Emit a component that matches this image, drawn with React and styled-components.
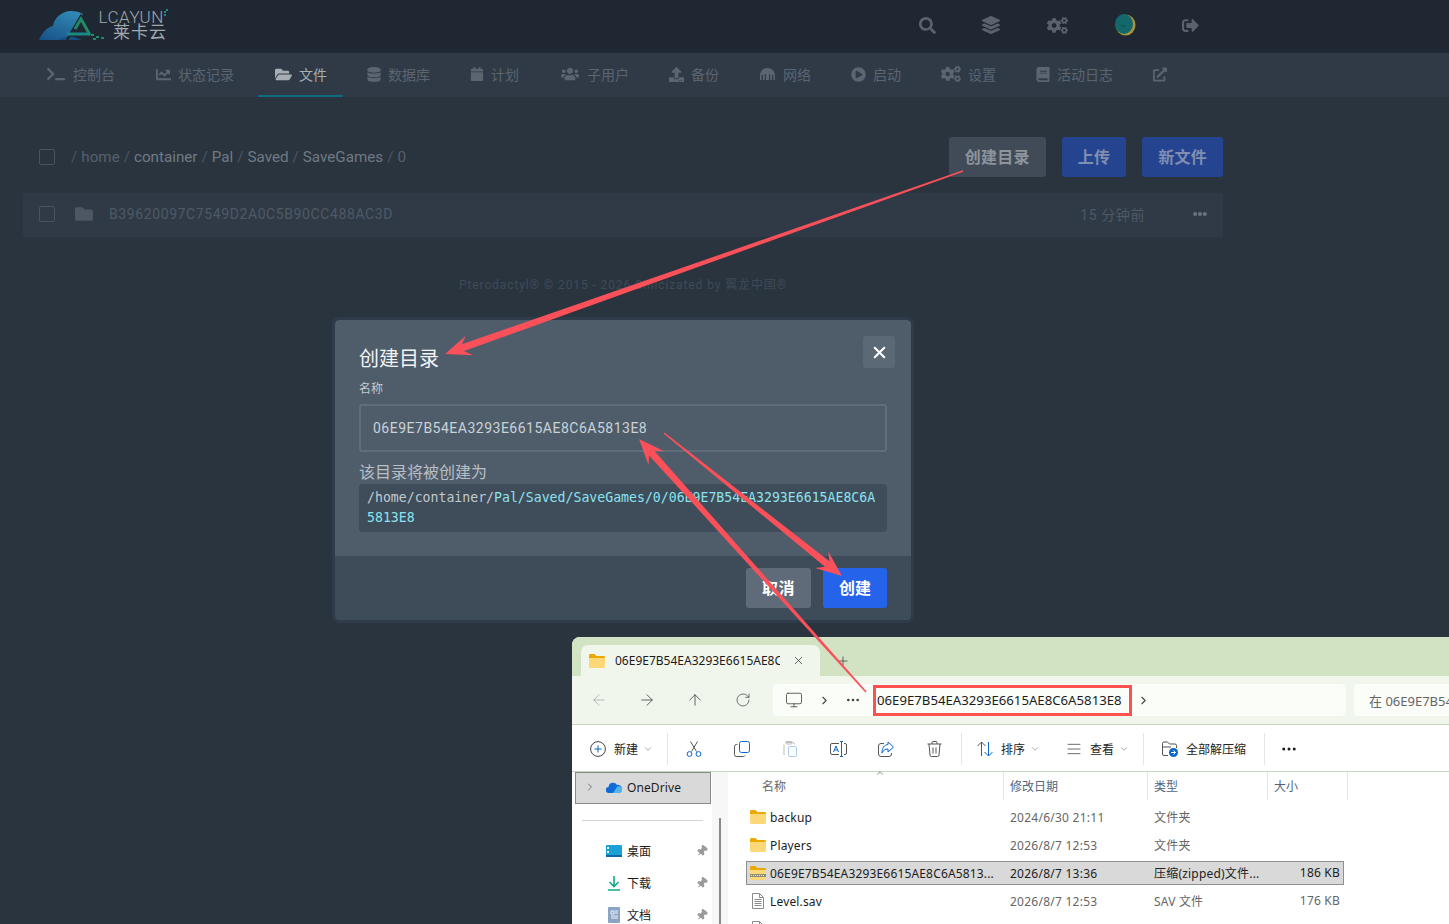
import React from 'react'
import styled, { createGlobalStyle } from 'styled-components'
import {
  FaTerminal, FaChartLine, FaFolderOpen, FaDatabase, FaCalendar, FaUsers, FaUpload,
  FaPlayCircle, FaCogs, FaBook, FaExternalLinkAlt, FaSearch, FaLayerGroup, FaSignOutAlt,
  FaFolder, FaEllipsisH,
} from 'react-icons/fa'
import {
  ArrowLeft, ArrowRight, ArrowUp, RotateCw, Monitor, ChevronRight, ChevronDown, ChevronUp,
  MoreHorizontal, Plus, X, AlignJustify, Pin,
} from 'lucide-react'

const UI_FONT = `Roboto, "Noto Sans CJK SC", sans-serif`
const WIN_FONT = `"Noto Sans", "Noto Sans CJK SC", sans-serif`

const Global = createGlobalStyle`
  html, body { margin: 0; padding: 0; background: #2a343f; }
  * { box-sizing: border-box; }
`

const Page = styled.div`
  position: relative;
  width: 100%;
  height: 924px;
  overflow: hidden;
  background: #2a343f;
  font-family: ${UI_FONT};
`

/* top bar */
const TopBar = styled.div`
  height: 53px;
  display: flex;
  align-items: center;
  padding: 0 0 3px 38px;
  background: #1f2733;
`
const LogoWrap = styled.div`
  display: flex;
  align-items: flex-start;
  height: 40px;
`
const LogoMark = styled.svg`
  margin-top: 4px;
`
const LogoText = styled.div`
  width: 70px;
  display: flex;
  flex-direction: column;
  align-items: flex-end;
  margin-left: -9px;
  color: #a3a8ac;
`
const LogoLatin = styled.span`
  position: relative;
  margin: 6px 5px 0 0;
  font-size: 17px;
  line-height: 13px;
  font-weight: 300;
  letter-spacing: 0.6px;
  &::after {
    content: '';
    position: absolute;
    right: -2px;
    top: 0;
    width: 2px;
    height: 2px;
    background: #1f8a83;
    box-shadow: 2px -2px 0 #1f8a83, 0 3px 0 #1f8a83;
  }
`
const LogoCjk = styled.span`
  margin: 0 2px 0 0;
  font-size: 17px;
  line-height: 17px;
  letter-spacing: 1px;
`
const TopIcons = styled.div`
  display: flex;
  align-items: center;
  margin-left: 726px;
`
const TopIcon = styled.div`
  width: ${p => p.$w}px;
  display: flex;
  justify-content: center;
  color: #5a626d;
  font-size: ${p => p.$size || 17}px;
`

const Avatar = () => (
  <svg width="22" height="22" viewBox="0 0 22 22">
    <ellipse cx="11.5" cy="11" rx="10" ry="10.5" fill="#a8943c" />
    <ellipse cx="10" cy="10" rx="9" ry="10" fill="#14676b" />
    <path d="M7 11c1 1.5 3 1.500 5 0" stroke="#0e4e52" fill="none" />
  </svg>
)

const Logo = () => (
  <LogoMark width="70" height="32" viewBox="0 0 70 32">
    <defs>
      <linearGradient id="cloud" x1="0" y1="1" x2="0.6" y2="0">
        <stop offset="0" stopColor="#174f86" />
        <stop offset="1" stopColor="#2f86b2" />
      </linearGradient>
    </defs>
    <path d="M1 31C4 24 9 18 15 17C16 9 24 2 33 2C38 2 42 3 45 5L32 28L29 31Z" fill="url(#cloud)" />
    <path d="M20 31C24 28 30 27 36 28L44 31Z" fill="#154f80" />
    <path d="M29 31L43 7L57 30" fill="none" stroke="#1f2733" strokeWidth="2.500" />
    <path d="M37 20L43 10L52 26" fill="none" stroke="#1f8a63" strokeWidth="3" />
    <path d="M29 25H52" fill="none" stroke="#178a86" strokeWidth="3" />
    <path d="M53 25h3v2h-3zM58 27h3v2h-3zM63 28h3v2h-3zM55 29h3v2h-3z" fill="#1f8a63" />
  </LogoMark>
)

/* server nav */
const NavBar = styled.div`
  height: 44px;
  display: flex;
  gap: 8px;
  padding-left: 30px;
  background: #303a47;
`
const NavItem = styled.div`
  height: 44px;
  display: flex;
  align-items: center;
  gap: 7px;
  padding: 0 16px 2px;
  font-size: 14px;
  color: ${p => (p.$active ? '#a6adb4' : '#5b6570')};
  box-shadow: ${p => (p.$active ? 'inset 0 -2px 0 #0e6a7f' : 'none')};
`
const NavGlyph = styled.span`
  display: flex;
  justify-content: center;
  width: ${p => p.$w}px;
  font-size: ${p => p.$size || 14}px;
`

const NetworkGlyph = () => (
  <svg width="15" height="12" viewBox="0 0 15 12" fill="currentColor">
    <path d="M0 12V7.500C0 3 3.400 0 7.500 0S15 3 15 7.500V12h-1.600V7H12v5h-1.800V6H9v6H6V6H4.800v6H3V7H1.600v5z" />
  </svg>
)

const navItems = [
  { label: '控制台', icon: <FaTerminal />, w: 20, size: 18 },
  { label: '状态记录', icon: <FaChartLine />, w: 16, size: 15 },
  { label: '文件', icon: <FaFolderOpen />, w: 18, size: 17, active: true },
  { label: '数据库', icon: <FaDatabase />, w: 14, size: 15 },
  { label: '计划', icon: <FaCalendar />, w: 14 },
  { label: '子用户', icon: <FaUsers />, w: 21, size: 18 },
  { label: '备份', icon: <FaUpload />, w: 15, size: 15 },
  { label: '网络', icon: <NetworkGlyph />, w: 17 },
  { label: '启动', icon: <FaPlayCircle />, w: 15, size: 15 },
  { label: '设置', icon: <FaCogs />, w: 20, size: 20 },
  { label: '活动日志', icon: <FaBook />, w: 14, size: 15 },
  { label: '', icon: <FaExternalLinkAlt />, w: 14, size: 15 },
]

/* file manager */
const Main = styled.div`
  width: 1200px;
  margin-left: 23px;
  padding-top: 40px;
`
const ActionRow = styled.div`
  height: 40px;
  display: flex;
  align-items: center;
  padding-left: 16px;
`
const CheckBox = styled.span`
  flex: none;
  width: 16px;
  height: 16px;
  border: 1.5px solid #48535f;
  border-radius: 2px;
`
const Crumbs = styled.div`
  margin-left: 16px;
  font-size: 15.2px;
  color: #4a5561;
`
const Crumb = styled.span`
  color: ${p => (p.$dim ? '#55606c' : '#707a84')};
  margin: 0 4px;
`
const Actions = styled.div`
  margin-left: auto;
  display: flex;
  gap: 16px;
`
const ActionButton = styled.div`
  height: 40px;
  padding: 0 16px 2px;
  display: flex;
  align-items: center;
  border-radius: 3px;
  font-size: 16px;
  font-weight: 700;
  letter-spacing: 0.25px;
  color: ${p => (p.$blue ? '#7f8eb1' : '#8d949b')};
  background: ${p => (p.$blue ? '#25448f' : '#414b58')};
`
const FileRow = styled.div`
  height: 44px;
  margin-top: 16px;
  display: flex;
  align-items: center;
  padding: 0 16px 2px;
  background: #303a47;
  border-radius: 2px;
  font-size: 14px;
  letter-spacing: 0.6px;
  color: #4e5965;
`
const FolderGlyph = styled.span`
  display: flex;
  margin: 0 16px 0 20px;
  font-size: 18px;
  color: #4d5763;
`
const FileTime = styled.span`
  margin-left: auto;
  margin-right: 48px;
`
const Dots = styled.span`
  display: flex;
  font-size: 14px;
  color: #6a737d;
`
const Credit = styled.div`
  margin-top: 38px;
  text-align: center;
  font-size: 12px;
  letter-spacing: 0.9px;
  color: #3f4a56;
`

/* modal */
const Modal = styled.div`
  position: absolute;
  left: 335px;
  top: 320px;
  width: 576px;
  height: 300px;
  display: flex;
  flex-direction: column;
  border-radius: 4px;
  overflow: hidden;
  background: #4f5d6b;
  outline: 3px solid #2f3b48;
`
const ModalBody = styled.div`
  height: 236px;
  padding: 25px 24px 0;
`
const ModalTitle = styled.div`
  font-size: 20px;
  line-height: 28px;
  color: #f1f3f5;
`
const FieldLabel = styled.div`
  margin-top: 7px;
  font-size: 12px;
  line-height: 18px;
  color: #c4cad0;
`
const NameField = styled.div`
  height: 48px;
  margin-top: 6px;
  display: flex;
  align-items: center;
  padding: 0 12px;
  border: 2px solid #606d7b;
  border-radius: 3px;
  font-size: 14px;
  letter-spacing: 0.5px;
  color: #cbd2d8;
`
const Hint = styled.div`
  margin-top: 8px;
  padding-top: 1px;
  height: 24px;
  font-size: 16px;
  line-height: 24px;
  color: #b8bfc6;
`
const PathBox = styled.div`
  padding: 4px 8px;
  background: #3f4c5a;
  border-radius: 4px;
  font-family: "DejaVu Sans Mono", monospace;
  font-size: 13.2px;
  line-height: 20px;
  word-break: break-all;
  color: #c2c9cf;
`
const PathTail = styled.span`
  color: #8ae3ef;
`
const ModalFoot = styled.div`
  flex: 1;
  display: flex;
  justify-content: flex-end;
  align-items: center;
  gap: 12px;
  padding: 0 24px;
  background: #3e4c5a;
`
const ModalButton = styled.div`
  height: 40px;
  padding: 0 16px 3px;
  display: flex;
  align-items: center;
  border-radius: 3px;
  font-size: 16px;
  font-weight: 700;
  letter-spacing: ${p => (p.$primary ? 0 : 0.5)}px;
  color: #fff;
  background: ${p => (p.$primary ? '#2563eb' : '#5f6b78')};
`
const CloseButton = styled.div`
  position: absolute;
  top: 16px;
  right: 16px;
  width: 32px;
  height: 32px;
  display: flex;
  align-items: center;
  justify-content: center;
  border-radius: 3px;
  color: #fff;
  background: #5b6876;
`

/* explorer window */
const Explorer = styled.div`
  position: absolute;
  left: 572px;
  top: 637px;
  width: 1000px;
  height: 300px;
  display: flex;
  flex-direction: column;
  border-top-left-radius: 8px;
  overflow: hidden;
  background: #fff;
  font-family: ${WIN_FONT};
  font-size: 12px;
  color: #1c1c1c;
`
const TabStrip = styled.div`
  flex: none;
  height: 39px;
  display: flex;
  padding: 8px 0 0 9px;
  background: #d2e3c3;
`
const Tab = styled.div`
  width: 239px;
  height: 31px;
  display: flex;
  align-items: center;
  padding-left: 8px;
  border-radius: 7px 7px 0 0;
  background: #f1f6ec;
`
const TabTitle = styled.span`
  width: 165px;
  margin-left: 10px;
  overflow: hidden;
  white-space: nowrap;
`
const TabClose = styled.span`
  display: flex;
  margin-left: 12px;
`
const TabPlus = styled.span`
  display: flex;
  align-items: center;
  margin-left: 16px;
  color: #333;
`
const AddressRow = styled.div`
  flex: none;
  height: 49px;
  display: flex;
  align-items: center;
  padding-left: 3px;
  background: #f1f6ec;
  border-bottom: 1px solid #c8d7bb;
`
const NavButton = styled.span`
  flex: none;
  width: 48px;
  display: flex;
  justify-content: center;
  color: ${p => (p.$off ? '#a9ada6' : '#444')};
`
const AddressBox = styled.div`
  flex: none;
  width: 573px;
  height: 32px;
  margin-left: 6px;
  display: flex;
  align-items: center;
  padding-left: 12px;
  border-radius: 4px;
  background: #fbfdf9;
`
const AddressPart = styled.span`
  display: flex;
  margin-left: ${p => p.$ml || 0}px;
  color: #444;
`
const MarkedCrumb = styled.div`
  flex: none;
  width: 259px;
  height: 31px;
  margin-left: 12px;
  display: flex;
  align-items: center;
  padding-left: 1px;
  border: 3px solid #ff5050;
  font-size: 13.2px;
  white-space: nowrap;
`
const SearchBox = styled.div`
  flex: none;
  width: 300px;
  height: 32px;
  margin-left: 8px;
  display: flex;
  align-items: center;
  padding-left: 15px;
  border-radius: 4px;
  background: #fbfdf9;
  font-size: 13px;
  white-space: nowrap;
  color: #666;
`
const CommandBar = styled.div`
  flex: none;
  height: 47px;
  display: flex;
  align-items: center;
  padding: 2px 0 0 8px;
  background: #fff;
  border-bottom: 1px solid #c9d7bc;
`
const MenuButton = styled.div`
  flex: none;
  width: ${p => p.$w}px;
  padding-left: ${p => p.$pl}px;
  display: flex;
  align-items: center;
  gap: 8px;
  white-space: nowrap;
  color: #222;
`
const CommandDivider = styled.span`
  flex: none;
  width: 1px;
  height: 32px;
  background: #e4e4e4;
`
const IconGroup = styled.div`
  display: flex;
  margin: 0 3px 0 2px;
`
const CommandIcon = styled.span`
  width: 48px;
  display: flex;
  justify-content: center;
`
const Caret = styled.span`
  display: flex;
  margin-left: -3px;
  color: #999;
`
const Panes = styled.div`
  flex: 1;
  display: flex;
`
const Sidebar = styled.div`
  flex: none;
  width: 140px;
`
const DriveRow = styled.div`
  width: 136px;
  height: 32px;
  margin-left: 3px;
  display: flex;
  align-items: center;
  padding: 0 0 2px 8px;
  background: #d9d9d9;
  border: 1px solid #8a8a8a;
  letter-spacing: 0.1px;
`
const DriveName = styled.span`
  margin-left: 5px;
`
const SideRule = styled.div`
  height: 1px;
  margin: 16px 9px 14px 10px;
  background: #d4d4d4;
`
const PlaceRow = styled.div`
  height: 32px;
  display: flex;
  align-items: center;
  padding: 0 4px 0 34px;
  gap: 5px;
`
const PinMark = styled.span`
  display: flex;
  margin-left: auto;
  color: #9a9a9a;
  transform: rotate(40deg);
`
const ScrollStrip = styled.div`
  flex: none;
  width: 16px;
  padding: 46px 0 0 7px;
  background: #f7f7f7;
`
const ScrollThumb = styled.div`
  width: 2px;
  height: 200px;
  background: #8a8a8a;
`
const Files = styled.div`
  position: relative;
  flex: 1;
`
const SortCaret = styled.span`
  position: absolute;
  left: 147px;
  top: -4px;
  display: flex;
  color: #777;
`
const HeaderRow = styled.div`
  height: 28px;
  display: grid;
  grid-template-columns: 276px 144px 120px 80px;
  margin-bottom: 5px;
`
const HeaderCell = styled.div`
  padding-left: ${p => p.$pl}px;
  display: flex;
  align-items: center;
  border-right: 1px solid #e5e5e5;
  color: ${p => (p.$first ? '#666' : '#51657d')};
`
const Row = styled.div`
  width: 598px;
  height: 24px;
  margin: 0 0 4px 18px;
  display: grid;
  grid-template-columns: 260px 144px 1fr;
  align-items: center;
  padding-left: 3px;
  border: 1px solid ${p => (p.$selected ? '#8f8f8f' : 'transparent')};
  background: ${p => (p.$selected ? '#d9d9d9' : 'transparent')};
`
const NameCell = styled.span`
  display: flex;
  align-items: center;
  gap: 4px;
  letter-spacing: 0.16px;
  white-space: nowrap;
`
const FileIconSlot = styled.span`
  width: 16px;
  display: flex;
  justify-content: center;
`
const DateCell = styled.span`
  letter-spacing: 0.25px;
  color: ${p => (p.$selected ? '#222' : '#666')};
`
const TypeCell = styled.span`
  display: flex;
  justify-content: space-between;
  padding-right: 3px;
  letter-spacing: 0.2px;
  white-space: nowrap;
  color: ${p => (p.$selected ? '#222' : '#666')};
`

const WinFolder = ({ zip }) => (
  <svg width="16" height="14" viewBox="0 0 16 14">
    <path d="M0 1.500C0 .7.6 0 1.400 0h4l2 2h7.200c.8 0 1.400.6 1.400 1.400V5H0z" fill="#eba900" />
    <path d="M0 4h16v8.600c0 .8-.6 1.400-1.400 1.400H1.400C.6 14 0 13.400 0 12.600z" fill="#fcd878" />
    {zip && <path d="M0 8h16v3H0z" fill="#8c8c78" />}
    {zip && <path d="M1 9.500h14" stroke="#e8e8da" strokeDasharray="1 1" />}
  </svg>
)
const WinDoc = () => (
  <svg width="14" height="16" viewBox="0 0 14 16" fill="#fff" stroke="#8a8a8a">
    <path d="M1.500.5h7l4 4v11h-11zM8.500.5v4h4" />
    <path d="M3.500 6.500h7M3.500 8.500h7M3.500 10.500h7M3.500 12.500h7" />
  </svg>
)
const CircleAdd = () => (
  <svg width="16" height="16" viewBox="0 0 16 16" fill="none">
    <circle cx="8" cy="8" r="7.400" stroke="#444" />
    <path d="M8 4.500v7M4.500 8h7" stroke="#0a66c8" />
  </svg>
)
const Cut = () => (
  <svg width="16" height="16" viewBox="0 0 16 16" fill="none" strokeWidth="1">
    <path d="M4.500 .5l6 10M11.500 .5l-6 10" stroke="#555" />
    <circle cx="3.500" cy="13" r="2.400" stroke="#0a66c8" />
    <circle cx="12.500" cy="13" r="2.400" stroke="#0a66c8" />
  </svg>
)
const CopyIcon = () => (
  <svg width="16" height="16" viewBox="0 0 16 16" fill="none">
    <rect x="5.500" y=".5" width="10" height="11" rx="2" stroke="#0a66c8" />
    <path d="M3.500 3.500h-1a2 2 0 0 0-2 2v8a2 2 0 0 0 2 2h7a2 2 0 0 0 1.600-1" stroke="#555" />
  </svg>
)
const PasteIcon = () => (
  <svg width="16" height="16" viewBox="0 0 16 16" fill="none" stroke="#bcbcbc">
    <path d="M3.500 1.500h7a2 2 0 0 1 2 2M2 14V3.500" />
    <rect x="4" y=".5" width="6" height="2.500" rx="1" />
    <rect x="6.500" y="5.500" width="8" height="10" rx="1.500" stroke="#a9cbee" />
  </svg>
)
const RenameIcon = () => (
  <svg width="17" height="16" viewBox="0 0 17 16" fill="none">
    <path d="M9 2.500H2A1.500 1.500 0 0 0 .5 4v8A1.500 1.500 0 0 0 2 13.500h7M14 2.500h1A1.500 1.500 0 0 1 16.500 4v8a1.500 1.500 0 0 1-1.500 1.500h-1" stroke="#555" />
    <path d="M10 .5h3M11.500 .5v15M10 15.500h3M3.500 11L6 5l2.500 6M4.500 9h3" stroke="#0a66c8" />
  </svg>
)
const ShareIcon = () => (
  <svg width="16" height="16" viewBox="0 0 16 16" fill="none">
    <path d="M6 2.500H3A2.500 2.500 0 0 0 .5 5v8A2.500 2.500 0 0 0 3 15.500h8a2.500 2.500 0 0 0 2.500-2.500v-1" stroke="#555" />
    <path d="M10 1l5.500 5L10 11V8C7 8 5.500 9 4 12c0-5 2-8 6-8.500z" stroke="#0a66c8" />
  </svg>
)
const TrashIcon = () => (
  <svg width="15" height="16" viewBox="0 0 15 16" fill="none" stroke="#555">
    <path d="M.5 3h14M5 3V1.500A1 1 0 0 1 6 .5h3a1 1 0 0 1 1 1V3M2 3l1 11a1.500 1.500 0 0 0 1.500 1.500h6A1.500 1.500 0 0 0 12 14l1-11M6 6.500v6M9 6.500v6" />
  </svg>
)
const SortIcon = () => (
  <svg width="16" height="16" viewBox="0 0 16 16" fill="none">
    <path d="M4.500 15V1M.5 5l4-4 4 4" stroke="#555" />
    <path d="M11.500 1v14M7.500 11l4 4 4-4" stroke="#0a66c8" />
  </svg>
)
const ExtractIcon = () => (
  <svg width="16" height="16" viewBox="0 0 16 16">
    <path d="M.5 13V2.500A1.500 1.500 0 0 1 2 1h3.500l2 2H13a1.500 1.500 0 0 1 1.500 1.500V7M.5 6H9M.5 13A1.500 1.500 0 0 0 2 14.500h4" fill="none" stroke="#555" />
    <circle cx="11.500" cy="11.500" r="4.500" fill="#0a66c8" />
    <path d="M9 11.500h4.500M11.500 9.500l2 2-2 2" fill="none" stroke="#fff" />
  </svg>
)
const CloudIcon = () => (
  <svg width="16" height="11" viewBox="0 0 16 11">
    <path d="M3 11a3 3 0 0 1-.4-6A4.500 4.500 0 0 1 11 3a3.500 3.500 0 0 1 2 8z" fill="#0f6cd6" />
    <path d="M7 11l4-6a3 3 0 0 1 5 3 3 3 0 0 1-3 3z" fill="#4fb4ee" />
  </svg>
)
const DesktopIcon = () => (
  <svg width="16" height="12" viewBox="0 0 16 12">
    <rect width="16" height="12" rx="1" fill="#1ba1d8" />
    <rect x="1" y="2" width="2" height="2" fill="#e8f6fc" />
    <rect x="1" y="6" width="2" height="2" fill="#e8f6fc" />
    <rect y="10" width="16" height="2" fill="#0e6a9c" />
  </svg>
)
const DownloadIcon = () => (
  <svg width="16" height="15" viewBox="0 0 16 15" fill="none" stroke="#14a88a" strokeWidth="1.600">
    <path d="M8 0v10M3.500 6L8 10.500 12.500 6M2 14h12" />
  </svg>
)
const DocsIcon = () => (
  <svg width="16" height="16" viewBox="0 0 16 16">
    <rect x="2" width="12" height="16" rx="1" fill="#8ba4c4" />
    <path d="M5 4h3v3H5zM9 4h3M9 6h3M5 9h7M5 11h7" stroke="#eef3f9" fill="none" />
  </svg>
)

const places = [
  { label: '桌面', icon: <DesktopIcon /> },
  { label: '下载', icon: <DownloadIcon /> },
  { label: '文档', icon: <DocsIcon /> },
]
const rows = [
  { name: 'backup', date: '2024/6/30 21:11', type: '文件夹', icon: <WinFolder /> },
  { name: 'Players', date: '2026/8/7 12:53', type: '文件夹', icon: <WinFolder /> },
  { name: '06E9E7B54EA3293E6615AE8C6A5813...', date: '2026/8/7 13:36', type: '压缩(zipped)文件...', size: '186 KB', icon: <WinFolder zip />, selected: true },
  { name: 'Level.sav', date: '2026/8/7 12:53', type: 'SAV 文件', size: '176 KB', icon: <WinDoc /> },
  { name: '', date: '', type: '', icon: <WinDoc /> },
]

/* hand-drawn annotation arrows sit over everything */
const Annotations = styled.svg`
  position: absolute;
  left: 0;
  top: 0;
  pointer-events: none;
`
const arrowPoints = (x0, y0, x1, y1) => {
  const len = Math.hypot(x1 - x0, y1 - y0)
  const dx = (x1 - x0) / len
  const dy = (y1 - y0) / len
  const at = (back, side) => `${x1 - dx * back - dy * side},${y1 - dy * back + dx * side}`
  return [
    at(len, 0.8),
    at(19, 3.5),
    at(26, 10.5),
    `${x1},${y1}`,
    at(26, -10.5),
    at(19, -3.5),
    at(len, -0.8),
  ].join(' ')
}

export default function App() {
  return (
    <Page>
      <Global />
      <TopBar>
        <LogoWrap>
          <Logo />
          <LogoText>
            <LogoLatin>LCAYUN</LogoLatin>
            <LogoCjk>莱卡云</LogoCjk>
          </LogoText>
        </LogoWrap>
        <TopIcons>
          <TopIcon $w={64}><FaSearch /></TopIcon>
          <TopIcon $w={64} $size={18}><FaLayerGroup /></TopIcon>
          <TopIcon $w={68} $size={21}><FaCogs /></TopIcon>
          <TopIcon $w={68}><Avatar /></TopIcon>
          <TopIcon $w={62}><FaSignOutAlt /></TopIcon>
        </TopIcons>
      </TopBar>

      <NavBar>
        {navItems.map(item => (
          <NavItem key={item.label || 'open'} $active={item.active}>
            <NavGlyph $w={item.w} $size={item.size}>{item.icon}</NavGlyph>
            {item.label}
          </NavItem>
        ))}
      </NavBar>

      <Main>
        <ActionRow>
          <CheckBox />
          <Crumbs>
            /<Crumb $dim>home</Crumb>/<Crumb>container</Crumb>/<Crumb>Pal</Crumb>/<Crumb>Saved</Crumb>/<Crumb>SaveGames</Crumb>/<Crumb $dim>0</Crumb>
          </Crumbs>
          <Actions>
            <ActionButton>创建目录</ActionButton>
            <ActionButton $blue>上传</ActionButton>
            <ActionButton $blue>新文件</ActionButton>
          </Actions>
        </ActionRow>
        <FileRow>
          <CheckBox />
          <FolderGlyph><FaFolder /></FolderGlyph>
          B39620097C7549D2A0C5B90CC488AC3D
          <FileTime>15 分钟前</FileTime>
          <Dots><FaEllipsisH /></Dots>
        </FileRow>
        <Credit>Pterodactyl® © 2015 - 2026 Sinicizated by 翼龙中国®</Credit>
      </Main>

      <Modal>
        <ModalBody>
          <ModalTitle>创建目录</ModalTitle>
          <FieldLabel>名称</FieldLabel>
          <NameField>06E9E7B54EA3293E6615AE8C6A5813E8</NameField>
          <Hint>该目录将被创建为</Hint>
          <PathBox>
            /home/container/<PathTail>Pal/Saved/SaveGames/0/06E9E7B54EA3293E6615AE8C6A5813E8</PathTail>
          </PathBox>
        </ModalBody>
        <ModalFoot>
          <ModalButton>取消</ModalButton>
          <ModalButton $primary>创建</ModalButton>
        </ModalFoot>
        <CloseButton><X size={19} strokeWidth={2.6} /></CloseButton>
      </Modal>

      <Explorer>
        <TabStrip>
          <Tab>
            <WinFolder />
            <TabTitle>06E9E7B54EA3293E6615AE8C6A5813E8</TabTitle>
            <TabClose><X size={13} strokeWidth={1.2} /></TabClose>
          </Tab>
          <TabPlus><Plus size={14} strokeWidth={1.2} /></TabPlus>
        </TabStrip>
        <AddressRow>
          <NavButton $off><ArrowLeft size={18} strokeWidth={1.1} /></NavButton>
          <NavButton><ArrowRight size={18} strokeWidth={1.1} /></NavButton>
          <NavButton><ArrowUp size={18} strokeWidth={1.1} /></NavButton>
          <NavButton><RotateCw size={16} strokeWidth={1.1} /></NavButton>
          <AddressBox>
            <AddressPart><Monitor size={18} strokeWidth={1.1} /></AddressPart>
            <AddressPart $ml={15}><ChevronRight size={13} /></AddressPart>
            <AddressPart $ml={14}><MoreHorizontal size={16} /></AddressPart>
            <MarkedCrumb>06E9E7B54EA3293E6615AE8C6A5813E8</MarkedCrumb>
            <AddressPart $ml={5}><ChevronRight size={13} /></AddressPart>
          </AddressBox>
          <SearchBox>在 06E9E7B54EA3293E6615AE8C6A5813E8</SearchBox>
        </AddressRow>
        <CommandBar>
          <MenuButton $w={87} $pl={10}><CircleAdd />新建<Caret><ChevronDown size={10} /></Caret></MenuButton>
          <CommandDivider />
          <IconGroup>
            <CommandIcon><Cut /></CommandIcon>
            <CommandIcon><CopyIcon /></CommandIcon>
            <CommandIcon><PasteIcon /></CommandIcon>
            <CommandIcon><RenameIcon /></CommandIcon>
            <CommandIcon><ShareIcon /></CommandIcon>
            <CommandIcon><TrashIcon /></CommandIcon>
          </IconGroup>
          <CommandDivider />
          <MenuButton $w={94} $pl={15}><SortIcon />排序<Caret><ChevronDown size={10} /></Caret></MenuButton>
          <MenuButton $w={87} $pl={10}><AlignJustify size={16} strokeWidth={1} />查看<Caret><ChevronDown size={10} /></Caret></MenuButton>
          <CommandDivider />
          <MenuButton $w={120} $pl={18}><ExtractIcon />全部解压缩</MenuButton>
          <CommandDivider />
          <CommandIcon><MoreHorizontal size={18} strokeWidth={2} /></CommandIcon>
        </CommandBar>
        <Panes>
          <Sidebar>
            <DriveRow>
              <AddressPart><ChevronRight size={12} color="#777" /></AddressPart>
              <AddressPart $ml={10}><CloudIcon /></AddressPart>
              <DriveName>OneDrive</DriveName>
            </DriveRow>
            <SideRule />
            {places.map(place => (
              <PlaceRow key={place.label}>
                {place.icon}
                {place.label}
                <PinMark><Pin size={12} fill="currentColor" /></PinMark>
              </PlaceRow>
            ))}
          </Sidebar>
          <ScrollStrip><ScrollThumb /></ScrollStrip>
          <Files>
            <SortCaret><ChevronUp size={10} /></SortCaret>
            <HeaderRow>
              <HeaderCell $pl={34} $first>名称</HeaderCell>
              <HeaderCell $pl={6}>修改日期</HeaderCell>
              <HeaderCell $pl={6}>类型</HeaderCell>
              <HeaderCell $pl={6}>大小</HeaderCell>
            </HeaderRow>
            {rows.map(row => (
              <Row key={row.date + row.name} $selected={row.selected}>
                <NameCell><FileIconSlot>{row.icon}</FileIconSlot>{row.name}</NameCell>
                <DateCell $selected={row.selected}>{row.date}</DateCell>
                <TypeCell $selected={row.selected}><span>{row.type}</span><span>{row.size}</span></TypeCell>
              </Row>
            ))}
          </Files>
        </Panes>
      </Explorer>

      <Annotations width="1449" height="924" viewBox="0 0 1449 924">
        <polygon points={arrowPoints(963, 171, 445, 354)} fill="#f9505a" />
        <polygon points={arrowPoints(664, 433, 842, 576)} fill="#f9505a" />
        <polygon points={arrowPoints(866, 692, 639, 439)} fill="#f9505a" />
      </Annotations>
    </Page>
  )
}
